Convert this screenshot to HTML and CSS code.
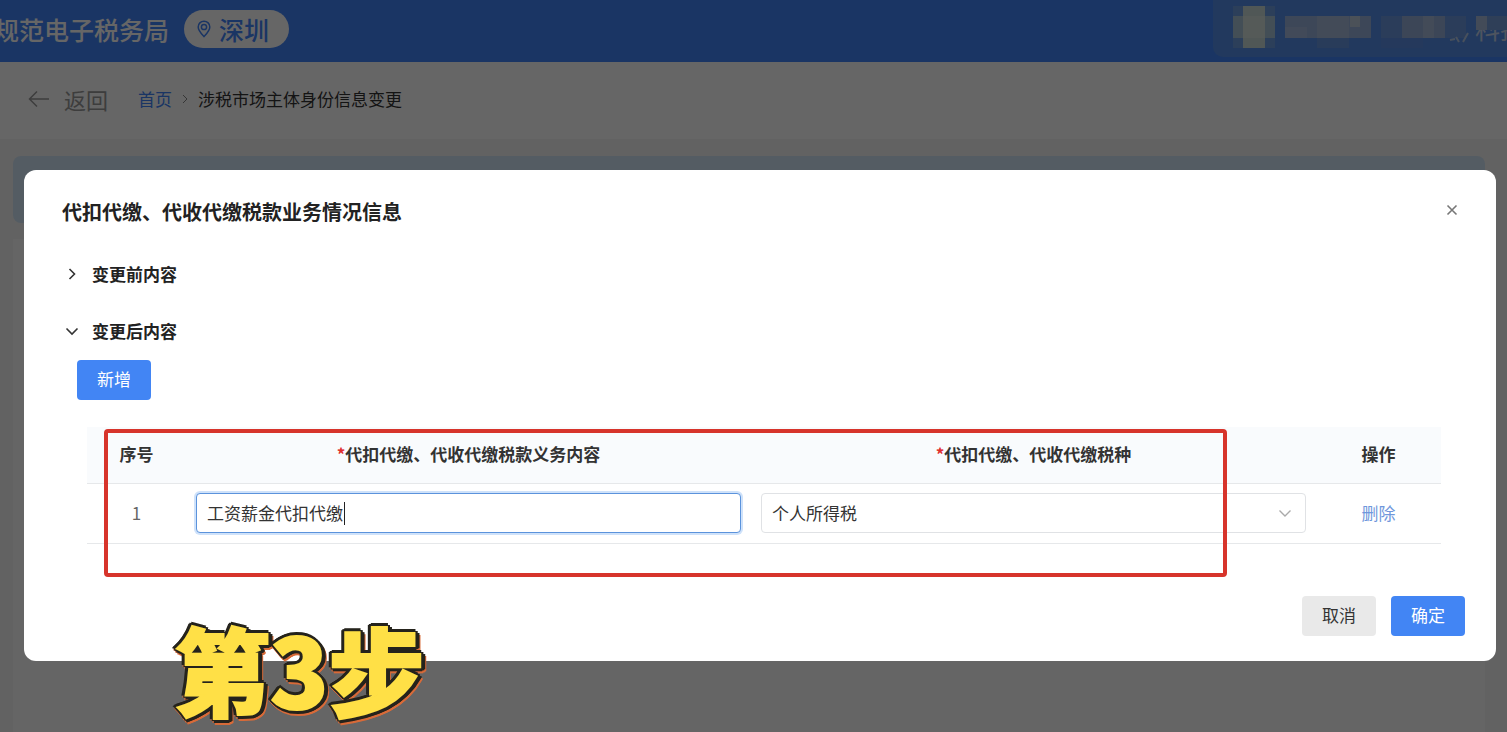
FILE: index.html
```html
<!DOCTYPE html>
<html lang="zh-CN">
<head>
<meta charset="utf-8">
<title>规范电子税务局</title>
<link rel="stylesheet" href="styles.css">
</head>
<body>
<header class="topbar">
  <span class="brand">规范电子税务局</span>
  <span class="city">
    <svg class="pin" viewBox="0 0 14 18" aria-hidden="true"><path d="M7 1.200C3.700 1.200 1.200 3.700 1.200 7c0 3.800 4 7.600 5.800 9.600C8.800 14.600 12.800 10.800 12.800 7c0-3.300-2.500-5.800-5.800-5.800z"/><circle cx="7" cy="7" r="2.600"/></svg>
    深圳
  </span>
  <div class="user">
    <span class="company">科技</span>
    <svg class="mosaic" viewBox="0 0 294 57" aria-hidden="true">
      <rect x="20" y="6" width="42" height="42" fill="#6f9fe0"/>
      <rect x="20" y="16" width="42" height="22" fill="#a9c3d8"/>
      <rect x="30" y="6" width="22" height="42" fill="#c8dad8"/>
      <rect x="30" y="16" width="22" height="22" fill="#d4e2dc"/>
      <rect x="72" y="16" width="86" height="22" fill="#98b2dc"/>
      <rect x="72" y="27" width="22" height="11" fill="#a6bade"/>
      <rect x="104" y="16" width="32" height="22" fill="#a8bcdc"/>
      <rect x="104" y="38" width="32" height="10" fill="#6796e0"/>
      <rect x="137" y="16" width="10" height="11" fill="#bccbdc"/>
      <rect x="168" y="16" width="85" height="22" fill="#6d99e0"/>
      <rect x="168" y="38" width="42" height="10" fill="#5c90e6"/>
      <rect x="189" y="16" width="43" height="22" fill="#96b0da"/>
      <rect x="210" y="16" width="11" height="22" fill="#a8bcdc"/>
      <path d="M237 40l5-1M243 37l3 5M250 42l5-9" stroke="#b4c8e6" stroke-width="2"/>
      <rect x="263" y="16" width="31" height="14" fill="#769fdc"/>
      <rect x="263" y="16" width="11" height="14" fill="#a8bcdc"/>
    </svg>
  </div>
</header>

<nav class="crumbs">
  <button class="back" type="button">
    <svg class="arrow" viewBox="0 0 22 18" aria-hidden="true"><path d="M21 9H1.500M9 1.500L1.500 9L9 16.500"/></svg>
    返回
  </button>
  <a class="home" href="#">首页</a>
  <svg class="sep" viewBox="0 0 6 10" aria-hidden="true"><path d="M1 1l4 4-4 4"/></svg>
  <span>涉税市场主体身份信息变更</span>
</nav>

<main class="content"><div class="notice"></div><div class="sheet"></div></main>

<div class="overlay">
  <section class="dialog" role="dialog" aria-labelledby="dialog-title">
    <div class="dialog-head">
      <h1 class="title" id="dialog-title">代扣代缴、代收代缴税款业务情况信息</h1>
      <button class="close" type="button" aria-label="关闭"><svg viewBox="0 0 12 12" aria-hidden="true"><path d="M1.500 1.500l9 9M10.500 1.500l-9 9"/></svg></button>
    </div>

    <button class="fold" type="button" aria-expanded="false">
      <svg class="chev" viewBox="0 0 14 14" aria-hidden="true"><path d="M4.500 2l5 5-5 5"/></svg>变更前内容
    </button>
    <button class="fold" type="button" aria-expanded="true">
      <svg class="chev" viewBox="0 0 14 14" aria-hidden="true"><path d="M1.500 4.500l5.500 5.500 5.500-5.500"/></svg>变更后内容
    </button>

    <button class="btn primary add" type="button">新增</button>

    <div class="table-area">
      <table class="grid">
        <colgroup><col class="col-no"><col><col><col class="col-op"></colgroup>
        <thead>
          <tr>
            <th>序号</th>
            <th><span class="req">*</span>代扣代缴、代收代缴税款义务内容</th>
            <th><span class="req">*</span>代扣代缴、代收代缴税种</th>
            <th>操作</th>
          </tr>
        </thead>
        <tbody>
          <tr>
            <td class="no">1</td>
            <td><div class="field active"><input class="control" type="text" aria-label="代扣代缴、代收代缴税款义务内容" value="工资薪金代扣代缴"><span class="caret"></span></div></td>
            <td><div class="field"><select class="control" aria-label="代扣代缴、代收代缴税种"><option>个人所得税</option></select><svg class="drop" viewBox="0 0 14 14" aria-hidden="true"><path d="M1.500 4.500l5.500 5.500 5.500-5.500"/></svg></div></td>
            <td><a class="delete" href="#">删除</a></td>
          </tr>
        </tbody>
      </table>
      <div class="highlight"></div>
    </div>

    <div class="actions">
      <button class="btn" type="button">取消</button>
      <button class="btn primary" type="button">确定</button>
    </div>
  </section>
  <div class="step">第3步</div>
</div>
</body>
</html>
```

FILE: styles.css
```css
* { box-sizing: border-box; }

body {
  display: flex;
  flex-direction: column;
  margin: 0;
  min-height: 100vh;
  overflow: hidden;
  background: #f5f5f5;
  color: #333;
  font: 17px/24px "Noto Sans CJK SC", sans-serif;
}

button, input, select { font: inherit; color: inherit; }
button { border: 0; padding: 0; background: none; cursor: pointer; }
a { text-decoration: none; }
svg { display: block; fill: none; flex: none; }

.topbar {
  display: flex;
  align-items: center;
  height: 62px;
  padding-bottom: 5px;
  background: #4285fa;
  color: #fff;
  overflow: hidden;
}
.brand { margin-left: -6px; font-size: 25px; font-weight: 500; line-height: 38px; }
.city {
  display: flex;
  align-items: center;
  gap: 8px;
  height: 38px;
  margin-left: 15px;
  padding: 0 20px 0 13px;
  border-radius: 19px;
  background: #fff;
  color: #4285fa;
  font-size: 25px;
  font-weight: 500;
}
.pin { width: 14px; height: 18px; stroke: #4285fa; stroke-width: 1.5; }
.user {
  position: relative;
  width: 294px;
  height: 57px;
  margin-left: auto;
  border-radius: 0 0 0 10px;
  background: #5590ea;
  overflow: hidden;
}
.company { display: block; padding: 14px 0 0 262px; font-size: 25px; line-height: 28px; white-space: nowrap; color: #c3d2ee; }
.mosaic { position: absolute; inset: 0; width: 294px; height: 57px; }

.crumbs {
  display: flex;
  align-items: center;
  height: 77px;
  padding: 0 28px 4px;
  background: #fff;
}
.back { display: flex; align-items: center; gap: 14px; margin-right: 30px; font-size: 22px; color: #999; }
.arrow { width: 22px; height: 18px; stroke: #999; stroke-width: 1.5; }
.home { color: #4285fa; }
.sep { width: 6px; height: 10px; margin: 0 10px; stroke: #888; }

.content { display: flex; flex-direction: column; flex: 1; padding: 17px 22px 0 13px; }
.notice { height: 67px; border-radius: 8px; background: #d2e6f8; }
.sheet { flex: 1; margin-top: 16px; background: #fcfcfc; }

.overlay {
  position: fixed;
  inset: 0;
  padding: 170px 11px 0 24px;
  background: rgba(0, 0, 0, 0.6);
}
.dialog {
  padding: 28px 31px 25px 38px;
  border-radius: 12px;
  background: #fff;
}
.dialog-head { display: flex; align-items: center; justify-content: space-between; margin-bottom: 36px; }
.title { margin: 0; font-size: 20px; line-height: 28px; font-weight: 700; color: #222; }
.close { padding: 5px 7px 9px; }
.close svg { width: 12px; height: 12px; stroke: #777; stroke-width: 1.6; }

.fold {
  display: flex;
  align-items: center;
  gap: 13px;
  margin: 0 0 33px 3px;
  font-weight: 700;
  color: #222;
}
.fold + .btn { margin-top: -16px; }
.chev { width: 14px; height: 14px; stroke: #333; stroke-width: 1.6; }

.btn {
  height: 40px;
  padding: 0 20px 2px;
  border-radius: 4px;
  background: #e9e9e9;
}
.primary { background: #4285f4; color: #fff; }
.add { display: block; margin-left: 15px; }

.table-area { position: relative; margin: 27px 24px 0 25px; }
.grid { width: 100%; table-layout: fixed; border-collapse: collapse; text-align: center; }
.col-no { width: 99px; }
.col-op { width: 125px; }
.grid th { height: 56px; padding: 0 0 2px; background: #f9fbfd; border-bottom: 1px solid #e6e8ea; font-weight: 700; }
.grid td { height: 60px; padding: 0 10px; border-bottom: 1px solid #e6e8ea; }
.req { color: #e02f2f; }
.no { color: #666; }
.delete { color: #6f97dc; }

.field { position: relative; }
.control {
  display: block;
  width: 100%;
  height: 40px;
  padding: 0 10px;
  border: 1px solid #e0e2e5;
  border-radius: 4px;
  background: #fff;
  outline: 0;
  appearance: none;
}
.active .control { padding-bottom: 2px; border-color: #5b93dc; box-shadow: 0 0 0 2px #cfe2fa; }
.caret { position: absolute; top: 9px; left: calc(12px + 8em); width: 1px; height: 23px; background: #222; }
.drop { position: absolute; top: 13px; right: 14px; width: 14px; height: 14px; stroke: #aaa; stroke-width: 1.4; }

.highlight {
  position: absolute;
  top: 2px;
  left: 17px;
  right: 214px;
  height: 148px;
  border: 4px solid #d7342b;
  border-radius: 4px;
  pointer-events: none;
}

.actions { display: flex; justify-content: flex-end; gap: 15px; margin-top: 52px; }

.step {
  position: absolute;
  left: 174px;
  top: 616px;
  font-size: 96px;
  line-height: 104px;
  font-weight: 900;
  color: #ffe046;
  -webkit-text-stroke: 2px #ffe046;
  filter: drop-shadow(2px 2px 0 #25231c) drop-shadow(-2px -2px 0 #25231c) drop-shadow(2px -1px 0 #25231c) drop-shadow(-1px 1px 0 #25231c) drop-shadow(1px 2px 0 #d86a38);
}
```
